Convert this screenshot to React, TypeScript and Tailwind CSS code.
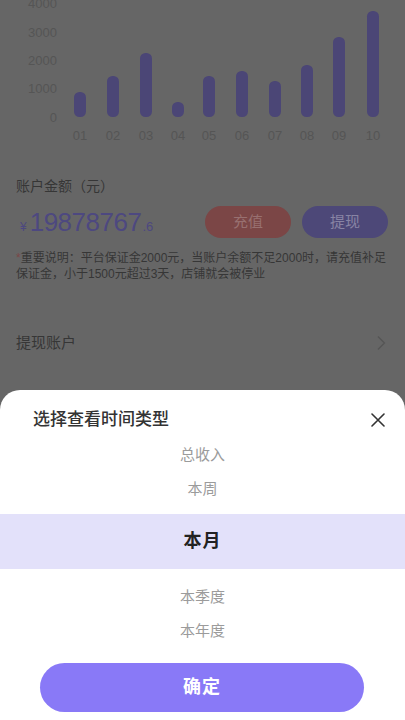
import React from "react";

const bars = [
  { x: 80, top: 92, label: "01" },
  { x: 113, top: 76, label: "02" },
  { x: 146, top: 53, label: "03" },
  { x: 178, top: 102, label: "04" },
  { x: 209, top: 76, label: "05" },
  { x: 242, top: 71, label: "06" },
  { x: 275, top: 81, label: "07" },
  { x: 307, top: 65, label: "08" },
  { x: 339, top: 37, label: "09" },
  { x: 373, top: 11, label: "10" },
];

const yTicks = [
  { y: 3, t: "4000" },
  { y: 32, t: "3000" },
  { y: 60, t: "2000" },
  { y: 88, t: "1000" },
  { y: 117, t: "0" },
];

function Chart() {
  return (
    <svg width="405" height="150" viewBox="0 0 405 150" className="block">
      {yTicks.map((t) => (
        <text
          key={t.t}
          x="57"
          y={t.y + 4.5}
          textAnchor="end"
          fontSize="13"
          fill="#555555"
          fontFamily="Liberation Sans, Arial, sans-serif"
        >
          {t.t}
        </text>
      ))}
      {bars.map((b) => (
        <g key={b.label}>
          <rect x={b.x - 6} y={b.top} width="12" height={117 - b.top} rx="5.5" fill="#4b4676" />
          <text
            x={b.x}
            y="140"
            textAnchor="middle"
            fontSize="13"
            fill="#555555"
            fontFamily="Liberation Sans, Arial, sans-serif"
          >
            {b.label}
          </text>
        </g>
      ))}
    </svg>
  );
}

export default function App() {
  const font = { fontFamily: '"Liberation Sans", "Noto Sans CJK SC", sans-serif' };
  const options = ["总收入", "本周"];
  const options2 = ["本季度", "本年度"];
  return (
    <div className="relative w-[405px] h-[720px] overflow-hidden bg-[#666666]" style={font}>
      {/* dimmed page */}
      <div className="flex flex-col">
        <Chart />
        <div className="px-4 pt-[26px]">
          <div className="text-[14px] leading-[20px] text-[#363636]">账户金额（元）</div>
          <div className="mt-[10px] flex items-center justify-between pr-[1px]">
            <div className="flex items-baseline pl-1 text-[#4d4880]">
              <span className="text-[12px] mr-[3px]">¥</span>
              <span className="text-[26px] leading-[32px] tracking-[-0.5px]">19878767</span>
              <span className="text-[13px] ml-[1px]">.6</span>
            </div>
            <div className="flex gap-[11px]">
              <div className="w-[86px] h-[32px] rounded-full bg-[#7b4646] flex items-center justify-center text-[15px] text-[#987070]">
                充值
              </div>
              <div className="w-[86px] h-[32px] rounded-full bg-[#4d4878] flex items-center justify-center text-[15px] text-[#8884a4]">
                提现
              </div>
            </div>
          </div>
          <p className="mt-3 text-[12px] leading-[16px] text-[#363636]">
            <span className="text-[#7b4646]">*</span>重要说明：平台保证金2000元，当账户余额不足2000时，请充值补足保证金，小于1500元超过3天，店铺就会被停业
          </p>
        </div>
        <div className="mt-[36px] h-[50px] px-4 flex items-center justify-between">
          <span className="text-[15px] text-[#363636]">提现账户</span>
          <svg width="10" height="16" viewBox="0 0 10 16" className="mr-[3px]">
            <path d="M2 1.5 L8.5 8 L2 14.5" fill="none" stroke="#555" strokeWidth="1.3" />
          </svg>
        </div>
      </div>

      {/* bottom sheet */}
      <div className="absolute left-0 right-0 bottom-0 h-[330px] bg-white rounded-t-[20px] flex flex-col pt-[18px] pb-2">
        <div className="flex items-center justify-between pl-[33px] pr-[20px] h-[24px]">
          <span className="text-[17px] font-medium text-[#333]">选择查看时间类型</span>
          <svg width="14" height="14" viewBox="0 0 14 14">
            <path d="M1 1 L13 13 M13 1 L1 13" stroke="#333" strokeWidth="1.6" strokeLinecap="round" />
          </svg>
        </div>
        <div className="mt-[6px] flex flex-col">
          {options.map((o) => (
            <div key={o} className="h-[34px] flex items-center justify-center text-[15px] text-[#9b9b9b]">
              {o}
            </div>
          ))}
          <div className="mt-2 mb-[11px] h-[55px] bg-[#e3e1fa] flex items-center justify-center text-[18px] font-bold text-[#222] tracking-[1px]">
            本月
          </div>
          {options2.map((o) => (
            <div key={o} className="h-[34px] flex items-center justify-center text-[15px] text-[#9b9b9b]">
              {o}
            </div>
          ))}
        </div>
        <div className="mt-[15px] px-10">
          <button className="w-[324px] h-[49px] rounded-full bg-[#8979f7] text-white text-[18px] font-bold tracking-[1px] flex items-center justify-center">
            确定
          </button>
        </div>
      </div>
    </div>
  );
}
